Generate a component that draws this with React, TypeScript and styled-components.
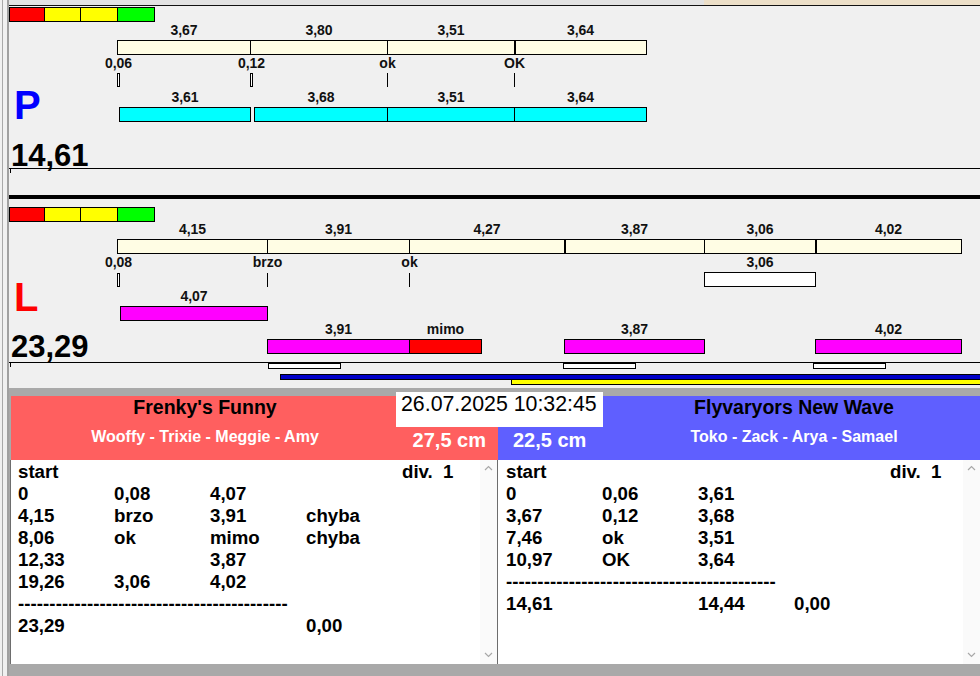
import React from "react";
import styled, { createGlobalStyle } from "styled-components";

const GlobalStyle = createGlobalStyle`
  html, body {
    margin: 0;
    padding: 0;
    background: #f0f0f0;
  }
  body {
    font-family: "Liberation Sans", Arial, sans-serif;
  }
  #root {
    width: 980px;
    height: 676px;
    overflow: hidden;
  }
`;

const Frame = styled.div`
  position: relative;
  width: 980px;
  height: 676px;
  box-sizing: border-box;
  padding-left: 7px;
  background: #f0f0f0;

  &::before {
    content: "";
    position: absolute;
    left: 2px;
    top: 0;
    bottom: 0;
    width: 1px;
    background: #a8a8a8;
  }
`;

const Main = styled.div`
  height: 100%;
  border-left: 2px solid #a0a0a0;
  display: flex;
  flex-direction: column;
`;

const TopStrip = styled.div`
  flex: none;
  height: 5px;
  border-bottom: 1px solid #111;
  background: linear-gradient(to right, #e2e2e2 0 695px, #ecdfc8 695px);
`;

const LaneSvg = styled.svg`
  display: block;
  flex: none;
  background: #f0f0f0;
`;

const ThickRule = styled.div`
  flex: none;
  height: 4px;
  background: #000;
`;

const Label = styled.text`
  font-family: "Liberation Sans", Arial, sans-serif;
  font-weight: 700;
  font-size: 14px;
  text-anchor: middle;
  fill: #111;
`;

const BigText = styled.text<{ $color: string; $size: number }>`
  font-family: "Liberation Sans", Arial, sans-serif;
  font-weight: 700;
  font-size: ${(p) => p.$size}px;
  fill: ${(p) => p.$color};
`;

const Lower = styled.div`
  flex: none;
  height: 288px;
  box-sizing: border-box;
  padding: 8px 0 12px 1px;
  background: #a9a9a9;
  display: flex;
  flex-direction: column;
`;

const HeaderRow = styled.div`
  position: relative;
  height: 64px;
  display: grid;
  grid-template-columns: 488px 1fr;
`;

const TeamHeader = styled.div<{ $bg: string; $inset?: boolean }>`
  background: ${(p) => p.$bg};
  margin-left: ${(p) => (p.$inset ? "1px" : "0")};
  display: flex;
  justify-content: space-between;
`;

const NameBlock = styled.div<{ $width: number }>`
  width: ${(p) => p.$width}px;
  display: flex;
  flex-direction: column;
  align-items: center;
`;

const TeamTitle = styled.div`
  font-size: 19.5px;
  font-weight: 700;
  line-height: 22px;
  color: #000;
  white-space: nowrap;
`;

const TeamDogs = styled.div`
  margin-top: 9px;
  font-size: 16px;
  font-weight: 700;
  line-height: 20px;
  color: #fff;
  white-space: nowrap;
`;

const CmLabel = styled.div<{ $side: "left" | "right" }>`
  align-self: flex-end;
  margin-bottom: 8px;
  padding-left: ${(p) => (p.$side === "right" ? "15px" : "0")};
  padding-right: ${(p) => (p.$side === "left" ? "12px" : "0")};
  font-size: 20px;
  font-weight: 700;
  line-height: 24px;
  color: #fff;
  white-space: nowrap;
`;

const DateBox = styled.div`
  position: absolute;
  left: 386px;
  top: -4px;
  width: 207px;
  height: 35px;
  box-sizing: border-box;
  padding-left: 5px;
  background: #fff;
  font-size: 21.33px;
  line-height: 24px;
  color: #000;
  white-space: nowrap;
  z-index: 1;
`;

const PanelRow = styled.div`
  height: 204px;
  display: grid;
  grid-template-columns: 488px 1fr;
`;

const TextPanel = styled.div<{ $framed?: boolean }>`
  display: flex;
  background: #fff;
  border-left: ${(p) => (p.$framed ? "1px solid #6d6d6d" : "none")};
  border-right: ${(p) => (p.$framed ? "1px solid #6d6d6d" : "none")};
  min-width: 0;
`;

const Listing = styled.div<{ $pad: number }>`
  flex: 1;
  padding: 1px 0 0 ${(p) => p.$pad}px;
  display: grid;
  grid-template-columns: repeat(4, 96px) 1fr;
  grid-auto-rows: 22px;
  align-content: start;
  font-size: 18.67px;
  font-weight: 700;
  line-height: 22px;
  color: #000;
`;

const Cell = styled.span`
  white-space: pre;
`;

const DashCell = styled.span`
  grid-column: 1 / -1;
  white-space: pre;
  letter-spacing: 0.06px;
  overflow: hidden;
`;

const Scrollbar = styled.div`
  flex: none;
  width: 17px;
  background: #fafafa;
  display: flex;
  flex-direction: column;
  justify-content: space-between;
  align-items: center;
  padding: 5px 0 6px;
`;

const CREAM = "#fffde4";
const SCALE = 36.22;
const X0 = 117;
const xAt = (t: number) => Math.round(X0 + t * SCALE);

function Box({
  x1,
  x2,
  y1,
  y2,
  fill,
}: {
  x1: number;
  x2: number;
  y1: number;
  y2: number;
  fill: string;
}) {
  return (
    <rect
      x={x1 + 0.5}
      y={y1 + 0.5}
      width={x2 - x1 - 1}
      height={y2 - y1 - 1}
      fill={fill}
      stroke="#000"
      strokeWidth={1}
    />
  );
}

function VLine({ x, y1, y2, w = 1 }: { x: number; y1: number; y2: number; w?: number }) {
  return <line x1={x + w / 2} x2={x + w / 2} y1={y1} y2={y2} stroke="#000" strokeWidth={w} />;
}

function Signal({ y }: { y: number }) {
  const cells: [number, number, string][] = [
    [9, 44, "#ff0000"],
    [44, 80, "#ffff00"],
    [80, 117, "#ffff00"],
    [117, 154, "#00ff00"],
  ];
  return (
    <>
      {cells.map(([a, b, c]) => (
        <Box key={a} x1={a} x2={b + 1} y1={y} y2={y + 15} fill={c} />
      ))}
    </>
  );
}

type Mark = { t: number; label: string; time?: boolean };
type Run = { from: number; to: number; label: string; fill: string };

function Legs({
  cuts,
  labels,
  thick,
  y,
}: {
  cuts: number[];
  labels: string[];
  thick: number[];
  y: number;
}) {
  const xs = cuts.map(xAt);
  return (
    <>
      <Box x1={xs[0]} x2={xs[xs.length - 1] + 1} y1={y} y2={y + 15} fill={CREAM} />
      {xs.slice(1, -1).map((x, i) => (
        <VLine key={x} x={x} y1={y} y2={y + 14} w={thick.includes(i + 1) ? 2 : 1} />
      ))}
      {labels.map((l, i) => (
        <Label key={i} x={(xs[i] + xs[i + 1]) / 2 + 0.5} y={y - 5}>
          {l}
        </Label>
      ))}
    </>
  );
}

function Marks({ marks, labelY, tickY }: { marks: Mark[]; labelY: number; tickY: number }) {
  return (
    <>
      {marks.map((m) => {
        const x = xAt(m.t);
        return (
          <g key={m.label}>
            <Label x={x + (m.time ? 1.5 : 0.5)} y={labelY}>
              {m.label}
            </Label>
            {m.time ? (
              <Box x1={x} x2={x + 3} y1={tickY} y2={tickY + 14} fill="#fff" />
            ) : (
              <VLine x={x} y1={tickY} y2={tickY + 14} />
            )}
          </g>
        );
      })}
    </>
  );
}

function Runs({ runs, y }: { runs: Run[]; y: number }) {
  return (
    <>
      {runs.map((r) => {
        const a = xAt(r.from);
        const b = xAt(r.to) + 1;
        return (
          <g key={r.label + r.from}>
            <Box x1={a} x2={b} y1={y} y2={y + 15} fill={r.fill} />
            <Label x={(a + b) / 2} y={y - 5}>
              {r.label}
            </Label>
          </g>
        );
      })}
    </>
  );
}

const CYAN = "#00ffff";
const MAGENTA = "#ff00ff";

const pRuns: Run[] = [
  { from: 0.06, to: 3.67, label: "3,61", fill: CYAN },
  { from: 3.79, to: 7.46, label: "3,68", fill: CYAN },
  { from: 7.46, to: 10.97, label: "3,51", fill: CYAN },
  { from: 10.97, to: 14.61, label: "3,64", fill: CYAN },
];

const lFirst: Run[] = [{ from: 0.08, to: 4.15, label: "4,07", fill: MAGENTA }];
const lSecond: Run[] = [
  { from: 4.15, to: 8.06, label: "3,91", fill: MAGENTA },
  { from: 8.06, to: 10.06, label: "mimo", fill: "#ff0000" },
  { from: 12.33, to: 16.2, label: "3,87", fill: MAGENTA },
  { from: 19.26, to: 23.29, label: "4,02", fill: MAGENTA },
];

function PLane() {
  return (
    <LaneSvg width={971} height={189} viewBox="9 6 971 189">
      <Signal y={7} />
      <Legs
        cuts={[0, 3.67, 7.46, 10.97, 14.61]}
        labels={["3,67", "3,80", "3,51", "3,64"]}
        thick={[3]}
        y={40}
      />
      <Marks
        marks={[
          { t: 0, label: "0,06", time: true },
          { t: 3.67, label: "0,12", time: true },
          { t: 7.46, label: "ok" },
          { t: 10.97, label: "OK" },
        ]}
        labelY={68}
        tickY={73}
      />
      <BigText $color="#0000ff" $size={40} x={14} y={119}>
        P
      </BigText>
      <Runs runs={pRuns} y={107} />
      <BigText $color="#000" $size={31} x={11} y={166}>
        14,61
      </BigText>
      <line x1={9} x2={980} y1={168.5} y2={168.5} stroke="#000" />
      <VLine x={10} y1={168} y2={173} />
    </LaneSvg>
  );
}

function LLane() {
  const skipA = xAt(16.2);
  const skipB = xAt(19.26) + 1;
  return (
    <LaneSvg width={971} height={189} viewBox="9 199 971 189">
      <Signal y={207} />
      <Legs
        cuts={[0, 4.15, 8.06, 12.33, 16.2, 19.26, 23.29]}
        labels={["4,15", "3,91", "4,27", "3,87", "3,06", "4,02"]}
        thick={[3, 5]}
        y={239}
      />
      <Marks
        marks={[
          { t: 0, label: "0,08", time: true },
          { t: 4.15, label: "brzo" },
          { t: 8.06, label: "ok" },
        ]}
        labelY={267}
        tickY={273}
      />
      <Box x1={skipA} x2={skipB} y1={272} y2={287} fill="#fff" />
      <Label x={(skipA + skipB) / 2} y={267}>
        3,06
      </Label>
      <BigText $color="#ff0000" $size={40} x={14} y={311}>
        L
      </BigText>
      <Runs runs={lFirst} y={306} />
      <Runs runs={lSecond} y={339} />
      <BigText $color="#000" $size={31} x={11} y={357}>
        23,29
      </BigText>
      <line x1={9} x2={980} y1={362.5} y2={362.5} stroke="#000" />
      <VLine x={10} y1={362} y2={367} />
      {[4.15, 12.33, 19.26].map((t, i) => {
        const a = xAt(t) + [1, -1, -2][i];
        return <Box key={t} x1={a} x2={a + 73} y1={363} y2={369} fill="#fff" />;
      })}
      <Box x1={280} x2={990} y1={374} y2={380} fill="#0000c8" />
      <Box x1={511} x2={990} y1={379} y2={385} fill="#ffff00" />
    </LaneSvg>
  );
}

function Chevron({ up }: { up?: boolean }) {
  return (
    <svg width="9" height="6" viewBox="0 0 9 6">
      <polyline
        points={up ? "1,5 4.5,1.5 8,5" : "1,1 4.5,4.5 8,1"}
        fill="none"
        stroke="#a8a8a8"
        strokeWidth={1.2}
      />
    </svg>
  );
}

type Row = string[] | "dash";

const leftRows: Row[] = [
  ["start", "", "", "", "div.  1"],
  ["0", "0,08", "4,07"],
  ["4,15", "brzo", "3,91", "chyba"],
  ["8,06", "ok", "mimo", "chyba"],
  ["12,33", "", "3,87"],
  ["19,26", "3,06", "4,02"],
  "dash",
  ["23,29", "", "", "0,00"],
];

const rightRows: Row[] = [
  ["start", "", "", "", "div.  1"],
  ["0", "0,06", "3,61"],
  ["3,67", "0,12", "3,68"],
  ["7,46", "ok", "3,51"],
  ["10,97", "OK", "3,64"],
  "dash",
  ["14,61", "", "14,44", "0,00"],
];

function ResultList({ rows, pad, framed }: { rows: Row[]; pad: number; framed?: boolean }) {
  return (
    <TextPanel $framed={framed}>
      <Listing $pad={pad}>
        {rows.map((row, i) =>
          row === "dash" ? (
            <DashCell key={i}>{"-".repeat(43)}</DashCell>
          ) : (
            [0, 1, 2, 3, 4].map((c) => <Cell key={`${i}-${c}`}>{row[c] ?? ""}</Cell>)
          )
        )}
      </Listing>
      <Scrollbar>
        <Chevron up />
        <Chevron />
      </Scrollbar>
    </TextPanel>
  );
}

export default function App() {
  return (
    <>
      <GlobalStyle />
      <Frame>
        <Main>
          <TopStrip />
          <PLane />
          <ThickRule />
          <LLane />
          <Lower>
            <HeaderRow>
              <TeamHeader $bg="#ff5f5f" $inset>
                <NameBlock $width={388}>
                  <TeamTitle>Frenky's Funny</TeamTitle>
                  <TeamDogs>Wooffy - Trixie - Meggie - Amy</TeamDogs>
                </NameBlock>
                <CmLabel $side="left">27,5 cm</CmLabel>
              </TeamHeader>
              <TeamHeader $bg="#5f5fff">
                <CmLabel $side="right">22,5 cm</CmLabel>
                <NameBlock $width={372}>
                  <TeamTitle>Flyvaryors New Wave</TeamTitle>
                  <TeamDogs>Toko - Zack - Arya - Samael</TeamDogs>
                </NameBlock>
              </TeamHeader>
              <DateBox>26.07.2025 10:32:45</DateBox>
            </HeaderRow>
            <PanelRow>
              <ResultList rows={leftRows} pad={7} framed />
              <ResultList rows={rightRows} pad={8} />
            </PanelRow>
          </Lower>
        </Main>
      </Frame>
    </>
  );
}
